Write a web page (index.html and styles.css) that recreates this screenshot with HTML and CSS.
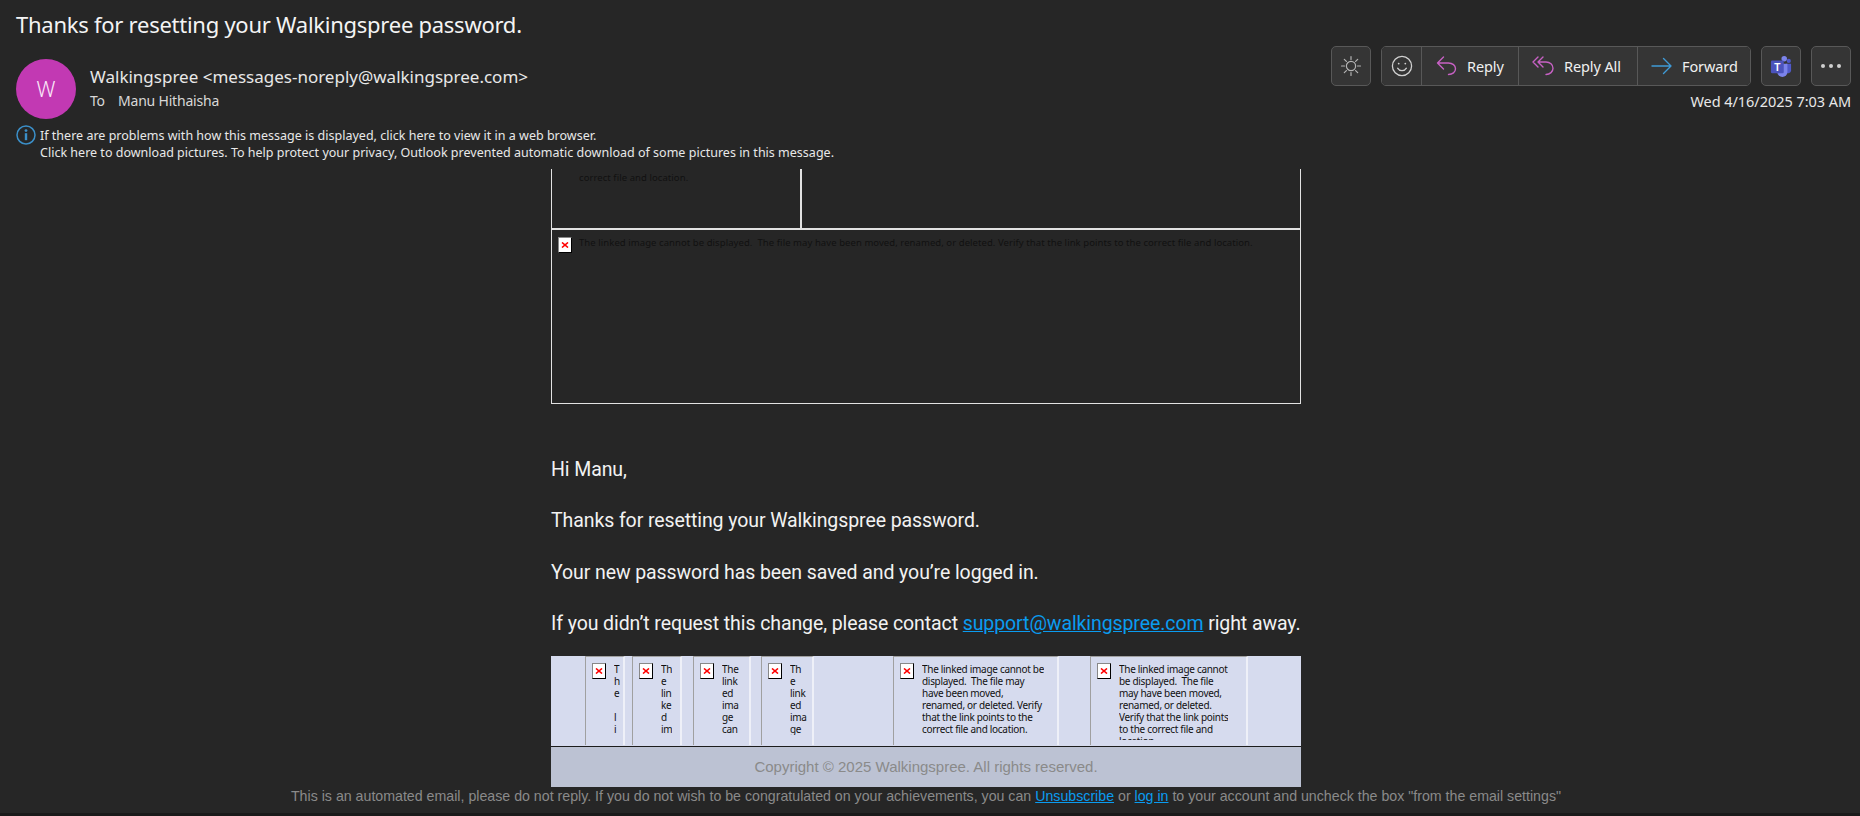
FILE: index.html
```html
<!DOCTYPE html>
<html lang="en">
<head>
<meta charset="utf-8">
<title>Thanks for resetting your Walkingspree password.</title>
<link rel="stylesheet" href="styles.css">
</head>
<body>
<header class="head">
  <h1 class="subject">Thanks for resetting your Walkingspree password.</h1>
  <div class="meta">
    <div class="avatar">W</div>
    <div class="who">
      <div class="sender">Walkingspree &lt;messages-noreply@walkingspree.com&gt;</div>
      <div class="to"><span class="to-label">To</span><span>Manu Hithaisha</span></div>
    </div>
    <div class="actions">
      <div class="toolbar">
        <button class="btn square sun-btn" aria-label="Switch background">
          <svg width="22" height="22" viewBox="0 0 22 22" fill="none" stroke="#b4b4b4" stroke-width="1.2" stroke-linecap="round"><circle cx="11" cy="11" r="4.6"/><path d="M11 1.5v3M11 17.5v3M1.5 11h3M17.5 11h3M4.3 4.3l2.1 2.1M15.6 15.6l2.1 2.1M4.3 17.7l2.1-2.1M15.6 6.4l2.1-2.1"/></svg>
        </button>
        <div class="group">
          <button class="seg seg-emoji" aria-label="React">
            <svg width="22" height="22" viewBox="0 0 22 22" fill="none" stroke="#d0d0d0" stroke-width="1.3" stroke-linecap="round"><circle cx="11" cy="11" r="9.6"/><circle cx="7.7" cy="8.6" r=".9" fill="#d0d0d0" stroke="none"/><circle cx="14.3" cy="8.6" r=".9" fill="#d0d0d0" stroke="none"/><path d="M6.6 13.2c1 1.7 2.6 2.5 4.4 2.5s3.400-.8 4.400-2.500"/></svg>
          </button>
          <button class="seg seg-reply">
            <svg width="21" height="20" viewBox="0 0 21 20" fill="none" stroke="#c761c4" stroke-width="1.400" stroke-linecap="round" stroke-linejoin="round"><path d="M7.500 1 1.500 7l6 6M1.500 7h11c4 0 7 2.500 7 5.800s-3 5.700-7 5.700"/></svg>
            <span>Reply</span>
          </button>
          <button class="seg seg-all">
            <svg width="22" height="20" viewBox="0 0 22 20" fill="none" stroke="#c761c4" stroke-width="1.400" stroke-linecap="round" stroke-linejoin="round"><path d="M6 1 1 6l5 5M11 1 6 6l5 5M6.500 6H14c4 0 7 2.800 7 6.200s-3 6.300-7 6.300"/></svg>
            <span>Reply All</span>
          </button>
          <button class="seg seg-fwd">
            <svg width="21" height="18" viewBox="0 0 21 18" fill="none" stroke="#3f9ad6" stroke-width="1.400" stroke-linecap="round" stroke-linejoin="round"><path d="M12.500 1.500 20 9l-7.500 7.500M20 9H1"/></svg>
            <span>Forward</span>
          </button>
        </div>
        <button class="btn square teams-btn" aria-label="Teams">
          <svg width="22" height="22" viewBox="0 0 24 24"><circle cx="15.500" cy="4" r="3" fill="#7b83eb"/><circle cx="20.500" cy="6.500" r="2.300" fill="#5059c9"/><path d="M17.500 9.500h5.500v7a3.500 3.500 0 0 1-5.500 2.800z" fill="#5059c9"/><path d="M8 9.500h11v9a5.500 5.500 0 0 1-11 0z" fill="#7b83eb"/><rect x="1" y="6" width="14" height="14" rx="1.500" fill="#4b53bc"/><text x="8" y="17" class="teams-t">T</text></svg>
        </button>
        <button class="btn square more-btn" aria-label="More">
          <span class="dot"></span><span class="dot"></span><span class="dot"></span>
        </button>
      </div>
      <div class="date">Wed 4/16/2025 7:03 AM</div>
    </div>
  </div>
  <div class="notice">
    <svg class="info" width="20" height="20" viewBox="0 0 20 20" fill="none"><circle cx="10" cy="10" r="9" stroke="#3b8fc8" stroke-width="1.500"/><rect x="8.800" y="8.200" width="2.400" height="7" fill="#3b8fc8"/><circle cx="10" cy="5.600" r="1.400" fill="#3b8fc8"/></svg>
    <div class="notice-text">
      <div>If there are problems with how this message is displayed, click here to view it in a web browser.</div>
      <div>Click here to download pictures. To help protect your privacy, Outlook prevented automatic download of some pictures in this message.</div>
    </div>
  </div>
</header>
<main class="mail">
  <div class="column">
    <section class="frame">
      <div class="frame-top">
        <div class="frame-cell clipped">
          <p class="alt-dark">correct file and location.</p>
        </div>
        <div class="frame-cell"></div>
      </div>
      <div class="frame-bottom">
        <span class="broken small"><svg viewBox="0 0 8 6" preserveAspectRatio="none" class="cross"><path d="M1 .5l6 5M7 .5l-6 5"/></svg></span>
        <p class="alt-dark wide">The linked image cannot be displayed.&nbsp; The file may have been moved, renamed, or deleted. Verify that the link points to the correct file and location.</p>
      </div>
    </section>
    <section class="copy">
      <p>Hi Manu,</p>
      <p>Thanks for resetting your Walkingspree password.</p>
      <p>Your new password has been saved and you’re logged in.</p>
      <p>If you didn’t request this change, please contact <a href="#">support@walkingspree.com</a> right away.</p>
    </section>
    <section class="band">
      <div class="tile t1"><span class="broken"><svg viewBox="0 0 8 6" preserveAspectRatio="none" class="cross"><path d="M1 .5l6 5M7 .5l-6 5"/></svg></span><p class="alt">T<br>h<br>e<br>&nbsp;<br>l<br>i</p></div>
      <div class="tile t2"><span class="broken"><svg viewBox="0 0 8 6" preserveAspectRatio="none" class="cross"><path d="M1 .5l6 5M7 .5l-6 5"/></svg></span><p class="alt">Th<br>e<br>lin<br>ke<br>d<br>im</p></div>
      <div class="tile t3"><span class="broken"><svg viewBox="0 0 8 6" preserveAspectRatio="none" class="cross"><path d="M1 .5l6 5M7 .5l-6 5"/></svg></span><p class="alt">The<br>link<br>ed<br>ima<br>ge<br>can</p></div>
      <div class="tile t4"><span class="broken"><svg viewBox="0 0 8 6" preserveAspectRatio="none" class="cross"><path d="M1 .5l6 5M7 .5l-6 5"/></svg></span><p class="alt">Th<br>e<br>link<br>ed<br>ima<br>ge</p></div>
      <div class="tile t5"><span class="broken"><svg viewBox="0 0 8 6" preserveAspectRatio="none" class="cross"><path d="M1 .5l6 5M7 .5l-6 5"/></svg></span><p class="alt">The linked image cannot be<br>displayed.&nbsp; The file may<br>have been moved,<br>renamed, or deleted. Verify<br>that the link points to the<br>correct file and location.</p></div>
      <div class="tile t6"><span class="broken"><svg viewBox="0 0 8 6" preserveAspectRatio="none" class="cross"><path d="M1 .5l6 5M7 .5l-6 5"/></svg></span><p class="alt">The linked image cannot<br>be displayed.&nbsp; The file<br>may have been moved,<br>renamed, or deleted.<br>Verify that the link points<br>to the correct file and<br>location.</p></div>
    </section>
    <section class="copyright">Copyright © 2025 Walkingspree. All rights reserved.</section>
  </div>
  <footer class="note">This is an automated email, please do not reply. If you do not wish to be congratulated on your achievements, you can <a href="#">Unsubscribe</a> or <a href="#">log in</a> to your account and uncheck the box "from the email settings"</footer>
</main>
</body>
</html>
```

FILE: styles.css
```css
* { box-sizing: border-box; }
html, body { margin: 0; height: 816px; overflow: hidden; }
body {
  background: #262626;
  color: #f0f0f0;
  font-family: "Noto Sans", "Open Sans", sans-serif;
  display: flex;
  flex-direction: column;
}
p { margin: 0; }

/* Message header */
.head { height: 169px; flex: none; padding: 0 9px 0 16px; }
.subject {
  margin: 0;
  height: 46px;
  font-size: 22px;
  font-weight: 400;
  line-height: 48px;
  letter-spacing: -0.26px;
  color: #f4f4f4;
}
.meta { display: flex; height: 79px; }
.avatar {
  width: 60px;
  height: 60px;
  margin-top: 13px;
  border-radius: 50%;
  background: #c239b3;
  color: #fbe9f9;
  font-size: 21px;
  font-weight: 300;
  display: flex;
  align-items: center;
  justify-content: center;
  flex: none;
}
.who { margin-left: 14px; padding-top: 19px; flex: 1; }
.sender { font-size: 17px; line-height: 24px; color: #e8e8e8; }
.to { font-size: 14px; line-height: 22px; margin-top: 1px; color: #d8d8d8; display: flex; letter-spacing: -0.2px; }
.to-label { width: 28px; }
.actions { display: flex; flex-direction: column; align-items: flex-end; }
.toolbar { display: flex; gap: 10px; height: 40px; }
.btn, .seg {
  background: #353535;
  border: 0;
  color: #f0f0f0;
  font: inherit;
  padding: 0;
  display: flex;
  align-items: center;
}
.square {
  width: 40px;
  height: 40px;
  border: 1.500px solid #585858;
  border-radius: 5px;
  justify-content: center;
}
.group {
  display: flex;
  border: 1.500px solid #585858;
  border-radius: 5px;
  overflow: hidden;
  height: 40px;
}
.seg { font-size: 14.500px; letter-spacing: -0.1px; gap: 10px; height: 100%; border-right: 1.500px solid #585858; }
.seg-emoji { width: 40px; justify-content: center; }
.seg-reply { width: 97px; padding-left: 14px; }
.seg-all { width: 119px; padding-left: 13px; }
.seg-fwd { width: 112px; padding-left: 13px; border-right: 0; gap: 10px; }
.teams-t { font: 700 11px "Liberation Sans", sans-serif; fill: #fff; text-anchor: middle; }
.more-btn { gap: 4px; }
.dot { width: 4px; height: 4px; border-radius: 50%; background: #d0d0d0; }
.date { margin-top: 5px; font-size: 14.500px; line-height: 20px; letter-spacing: -0.05px; color: #e8e8e8; }
.notice { display: flex; height: 44px; }
.info { flex: none; margin-right: 4px; }
.notice-text { font-size: 12.500px; line-height: 17px; letter-spacing: 0.01px; color: #e8e8e8; padding-top: 2px; }

/* Message body */
.mail { flex: 1; display: flex; flex-direction: column; min-height: 0; border-bottom: 3px solid #1a1a1a; }
.column { width: 750px; margin: 0 auto 0 551px; flex: none; }
.frame {
  height: 235px;
  border: solid #e2e2e2;
  border-width: 0 1px 1px;
  display: flex;
  flex-direction: column;
}
.frame-top { height: 61px; display: flex; border-bottom: 2px solid #e2e2e2; flex: none; }
.frame-cell { flex: 1; }
.frame-cell.clipped { flex: none; width: 250px; border-right: 2px solid #e2e2e2; padding: 3px 0 0 27px; }
.frame-bottom { display: flex; padding: 7px 0 0 6px; flex: 1; }
.alt-dark { font-size: 9.500px; line-height: 12px; letter-spacing: 0.07px; color: #111; }
.wide { margin-left: 7px; white-space: nowrap; }
.broken {
  width: 14px;
  height: 16px;
  background: #fff;
  border: 1px solid;
  border-color: #888 #000 #000 #888;
  display: flex;
  align-items: center;
  justify-content: center;
  flex: none;
}
.cross { width: 8px; height: 6px; fill: none; stroke: #f00; stroke-width: 1.600; }
.copy {
  margin-top: 53px;
  font-family: "Roboto", sans-serif;
  font-size: 19.500px;
  line-height: 25.700px;
  letter-spacing: -0.09px;
  color: #f2f2f2;
}
.copy p { margin-bottom: 25.700px; white-space: nowrap; }
.copy p:last-child { margin-bottom: 0; }
.copy a, .note a { color: #0a9cf0; text-decoration: underline; }
.band {
  margin-top: 19px;
  height: 91px;
  background: #d6dbee;
  display: flex;
  border-bottom: 1px solid #1c1c1c;
}
.tile {
  height: 89px;
  border: solid;
  border-width: 1px 2px 0 1px;
  border-color: #a0a0a0 #eef0f8 #eef0f8 #a0a0a0;
  display: flex;
  align-items: flex-start;
  padding: 6px 0 0 6px;
  overflow: hidden;
  flex: none;
}
.alt { margin-left: 8px; font-size: 10px; line-height: 12px; max-height: 77px; overflow: hidden; color: #111; white-space: nowrap; letter-spacing: -0.3px; }
.t1 { width: 40px; margin-left: 34px; }
.t2 { width: 50px; margin-left: 7px; }
.t3 { width: 58px; margin-left: 11px; }
.t4 { width: 53px; margin-left: 10px; }
.t5 { width: 166px; margin-left: 79px; }
.t6 { width: 158px; margin-left: 31px; }
.copyright {
  height: 40px;
  background: #bcc2d3;
  color: #8a8a8a;
  font-family: "Liberation Sans", sans-serif;
  font-size: 15px;
  line-height: 40px;
  text-align: center;
}
.note {
  height: 26px;
  color: #8a8a8a;
  font-family: "Liberation Sans", sans-serif;
  font-size: 14.200px;
  line-height: 18px;
  text-align: center;
  padding: 0 8px 0 0;
}
```
